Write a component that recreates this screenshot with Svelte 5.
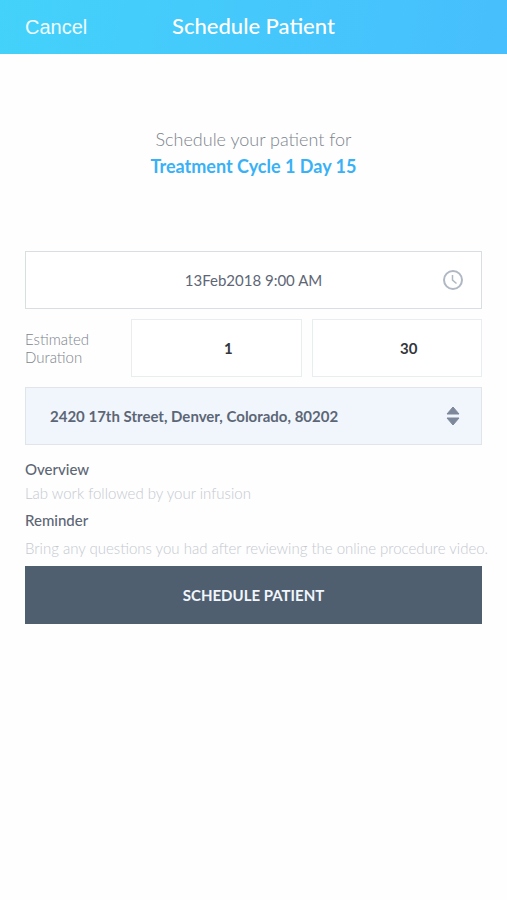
<script lang="ts">
  // Form state
  let appointment = $state('13Feb2018 9:00 AM')
  let hours = $state('1')
  let minutes = $state('30')
  let location = $state('denver')

  const locations = [
    { id: 'denver', address: '2420 17th Street, Denver, Colorado, 80202' }
  ]

  const notes = [
    { title: 'Overview', text: 'Lab work followed by your infusion' },
    { title: 'Reminder', text: 'Bring any questions you had after reviewing the online procedure video.' }
  ]

  function schedule(event: SubmitEvent) {
    event.preventDefault()
  }
</script>

<div class="screen">
  <header class="navbar">
    <button class="btn-cancel" type="button">Cancel</button>
    <h1>Schedule Patient</h1>
  </header>

  <main>
    <div class="intro">
      <p>Schedule your patient for</p>
      <h2>Treatment Cycle 1 Day 15</h2>
    </div>

    <form onsubmit={schedule}>
      <div class="field date">
        <input type="text" aria-label="Appointment time" bind:value={appointment} />
        <svg class="icon-clock" viewBox="0 0 20 20" aria-hidden="true">
          <circle cx="10" cy="10" r="9" />
          <path d="M9.5 5v5.2l4 3.3" />
        </svg>
      </div>

      <div class="duration">
        <label for="duration-hours">Estimated Duration</label>
        <input id="duration-hours" type="text" inputmode="numeric" bind:value={hours} />
        <input type="text" inputmode="numeric" aria-label="Minutes" bind:value={minutes} />
      </div>

      <div class="field location">
        <select aria-label="Location" bind:value={location}>
          {#each locations as item}
            <option value={item.id}>{item.address}</option>
          {/each}
        </select>
        <svg class="icon-sort" viewBox="0 0 14 20" aria-hidden="true">
          <path d="M7 1L13 8H1Z" />
          <path d="M7 19L1 12H13Z" />
        </svg>
      </div>

      <div class="notes">
        {#each notes as note}
          <section>
            <h3>{note.title}</h3>
            <p>{note.text}</p>
          </section>
        {/each}
      </div>

      <button class="btn-schedule" type="submit">SCHEDULE PATIENT</button>
    </form>
  </main>
</div>

<style>
  :global(body) {
    background: #fefefe;
  }

  .screen {
    font-family: Lato, 'Liberation Sans', sans-serif;
    color: #5d6675;
  }

  h1,
  h2,
  h3,
  p {
    margin: 0;
  }

  .navbar {
    display: grid;
    grid-template-columns: 1fr auto 1fr;
    align-items: center;
    height: 54px;
    padding: 0 25px;
    background: linear-gradient(100deg, #43d2fa, #47befd);
    color: #fff;
  }

  .btn-cancel {
    justify-self: start;
    padding: 0;
    border: 0;
    background: none;
    color: #f0fcff;
    font-family: 'Liberation Sans', sans-serif;
    font-size: 20px;
    line-height: 24px;
    cursor: pointer;
  }

  .navbar h1 {
    padding-bottom: 2px;
    font-size: 22px;
    font-weight: 500;
    line-height: 26px;
  }

  main {
    padding: 72px 25px 24px;
  }

  .intro {
    text-align: center;
    line-height: 27px;
  }

  .intro p {
    color: #7d848d;
    font-size: 18px;
    font-weight: 300;
  }

  .intro h2 {
    color: #38b1f6;
    font-size: 18px;
    font-weight: 700;
  }

  form {
    display: flex;
    flex-direction: column;
    gap: 10px;
    margin-top: 71px;
  }

  input,
  select {
    box-sizing: border-box;
    width: 100%;
    height: 58px;
    margin: 0;
    border: 1px solid #d9dee3;
    border-radius: 0;
    background: #fff;
    color: #5d6675;
    font-family: inherit;
    font-size: 15px;
    text-align: center;
  }

  .field {
    position: relative;
    display: flex;
  }

  .icon-clock {
    position: absolute;
    top: 19px;
    right: 19px;
    width: 20px;
    height: 20px;
    fill: none;
    stroke: #b0b8c4;
    stroke-width: 2;
  }

  .icon-clock path {
    stroke-width: 1.5;
  }

  .duration {
    display: grid;
    grid-template-columns: 96px 1fr 1fr;
    align-items: center;
    gap: 10px;
  }

  .duration label {
    width: 80px;
    color: #7d848d;
    font-size: 15px;
    font-weight: 300;
    line-height: 18px;
  }

  .duration input {
    padding: 0 0 0 24px;
    border-color: #e8edf0;
    color: #33363b;
    font-weight: 700;
  }

  .location select {
    appearance: none;
    padding: 0 48px 0 24px;
    border-color: #dfe5ea;
    background: #f1f6fd;
    font-weight: 700;
    text-align: left;
  }

  .icon-sort {
    position: absolute;
    top: 19px;
    right: 22px;
    width: 14px;
    height: 20px;
    fill: #7d889b;
    stroke: #7d889b;
    stroke-linejoin: round;
    pointer-events: none;
  }

  /* Notes may run a little into the page's right padding */
  .notes {
    display: flex;
    flex-direction: column;
    gap: 3px;
    margin: 2px -16px -4px 0;
  }

  .notes h3 {
    font-size: 15px;
    font-weight: 500;
    line-height: 24px;
  }

  .notes p {
    color: #c4c9d0;
    font-size: 15px;
    font-weight: 300;
    line-height: 24px;
  }

  .notes section:last-child p {
    padding-top: 4px;
  }

  .btn-schedule {
    height: 58px;
    border: 0;
    background: #505f70;
    color: #f1f6fd;
    font-family: inherit;
    font-size: 15px;
    font-weight: 700;
    cursor: pointer;
  }
</style>
